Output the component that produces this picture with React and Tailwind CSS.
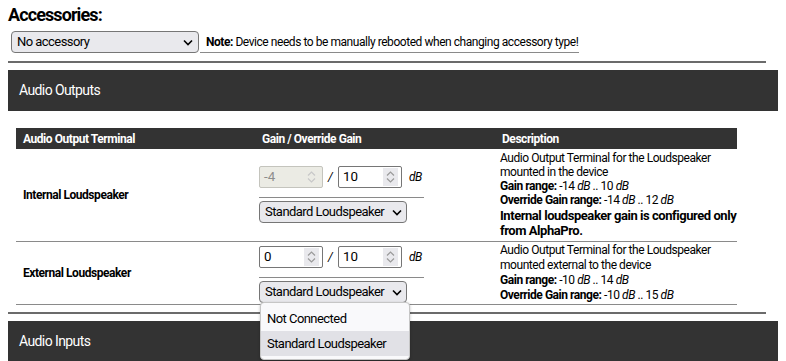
import React from 'react'

const body = { fontFamily: 'Roboto, "Liberation Sans", sans-serif' }

function NumberBox({ value, disabled }) {
  return (
    <div
      className={`flex items-center w-[64px] h-[22px] border rounded-[2px] pl-[4px] pr-[3px] ${
        disabled ? 'bg-[#ebebe4] border-[#c4c4bd] text-[#8d8d8d]' : 'bg-white border-[#767676] text-black'
      }`}
    >
      <span className="flex-1 text-[13.33px]">{value}</span>
      <span className={`w-[15px] h-[18px] flex flex-col items-center justify-center ${disabled ? '' : 'bg-[#e9e9ed]'}`}>
        <svg width="9" height="14" viewBox="0 0 9 14" fill="none" stroke={disabled ? '#c8c8c8' : '#9a9a9a'} strokeWidth="1.2">
          <path d="M1 5.5 4.5 2 8 5.5" />
          <path d="M1 8.5 4.5 12 8 8.5" />
        </svg>
      </span>
    </div>
  )
}

function FakeSelect({ children, width }) {
  return (
    <div
      className={`flex items-center justify-between gap-[8px] h-[22px] border border-[#767676] rounded-[4px] bg-[#e9e9ed] pl-[5px] pr-[5px] text-[13px] tracking-[-0.55px] text-black whitespace-nowrap ${width}`}
    >
      <span>{children}</span>
      <svg className="shrink-0" width="10" height="7" viewBox="0 0 10 7" fill="none" stroke="#000" strokeWidth="1.6">
        <path d="M1 1.5 5 5.5 9 1.5" />
      </svg>
    </div>
  )
}

function GainCell({ gain, override, disabled }) {
  return (
    <div className="flex items-center w-[165px] border-b border-[#8a8a8a] pb-[9px]">
      <NumberBox value={gain} disabled={disabled} />
      <span className="w-[15px] text-center italic text-[12px]">/</span>
      <NumberBox value={override} />
      <span className="ml-[7px] italic text-[12px] tracking-[-0.5px]">dB</span>
    </div>
  )
}

export default function App() {
  return (
    <div className="relative w-[786px] h-[361px] overflow-hidden bg-white text-black" style={body}>
      <div className="pl-[8px] pt-[3px]">
        <h2 className="text-[18px] font-bold leading-[24px] tracking-[-0.9px]">Accessories:</h2>

        <div className="flex items-end mt-[4px] pl-[3px]">
          <FakeSelect width="w-[188px]">No accessory</FakeSelect>
          <div className="ml-[1px] pl-[6px] pr-[1px] pb-[2px] border-b border-[#8a8a8a] text-[12px] leading-[15px] tracking-[-0.45px] whitespace-nowrap">
            <b>Note:</b> Device needs to be manually rebooted when changing accessory type!
          </div>
        </div>

        <div className="w-[758px] h-[2px] bg-[#6b6b6b] mt-[8px]" />

        <div className="w-[770px] h-[41px] bg-[#333333] mt-[7px] flex items-center pl-[11px] text-white text-[14px] tracking-[-0.6px]">
          Audio Outputs
        </div>

        {/* outputs table */}
        <div className="ml-[8px] mt-[17px] w-[721px] text-[12px] tracking-[-0.45px]">
          <div className="grid grid-cols-[239px_241px_241px] h-[21px] bg-[#333333] text-white font-bold items-center">
            <div className="pl-[7px]">Audio Output Terminal</div>
            <div className="pl-[7px]">Gain / Override Gain</div>
            <div className="pl-[6px]">Description</div>
          </div>

          <div className="grid grid-cols-[239px_241px_241px] border-b border-[#8a8a8a] h-[93px]">
            <div className="pl-[7px] flex items-center font-bold">Internal Loudspeaker</div>
            <div className="pl-[4px] pt-[17px] tracking-normal">
              <GainCell gain="-4" override="10" disabled />
              <div className="mt-[3px]">
                <FakeSelect width="w-[148px]">Standard Loudspeaker</FakeSelect>
              </div>
            </div>
            <div className="pl-[4px] pt-[2px] leading-[14px] whitespace-nowrap">
              <div>Audio Output Terminal for the Loudspeaker</div>
              <div>mounted in the device</div>
              <div><b>Gain range:</b> -14 <i>dB</i> .. 10 <i>dB</i></div>
              <div><b>Override Gain range:</b> -14 <i>dB</i> .. 12 <i>dB</i></div>
              <div className="font-bold text-[13px] leading-[15px] mt-[1px]">
                <div>Internal loudspeaker gain is configured only</div>
                <div>from AlphaPro.</div>
              </div>
            </div>
          </div>

          <div className="grid grid-cols-[239px_241px_241px] border-b border-[#8a8a8a] h-[63px]">
            <div className="pl-[7px] flex items-center font-bold">External Loudspeaker</div>
            <div className="pl-[4px] pt-[4px] tracking-normal">
              <GainCell gain="0" override="10" />
              <div className="mt-[3px]">
                <FakeSelect width="w-[148px]">Standard Loudspeaker</FakeSelect>
              </div>
            </div>
            <div className="pl-[4px] pt-[1px] leading-[15px] whitespace-nowrap">
              <div>Audio Output Terminal for the Loudspeaker</div>
              <div>mounted external to the device</div>
              <div><b>Gain range:</b> -10 <i>dB</i> .. 14 <i>dB</i></div>
              <div><b>Override Gain range:</b> -10 <i>dB</i> .. 15 <i>dB</i></div>
            </div>
          </div>
        </div>

        <div className="w-[758px] h-[2px] bg-[#6b6b6b] mt-[7px]" />

        <div className="w-[770px] h-[41px] bg-[#333333] mt-[7px] flex items-center pl-[11px] text-white text-[14px] tracking-[-0.6px]">
          Audio Inputs
        </div>
      </div>

      {/* open dropdown */}
      <div className="absolute left-[260px] top-[302px] w-[150px] bg-[#f9f9fb] border border-[#c6c6c6] rounded-[4px] shadow-[0_1px_3px_rgba(0,0,0,0.25)] py-[3px] text-[13px] tracking-[-0.55px] text-black">
        <div className="h-[25px] flex items-center pl-[6px]">Not Connected</div>
        <div className="h-[25px] flex items-center pl-[6px] bg-[#e1e1e6]">Standard Loudspeaker</div>
      </div>
    </div>
  )
}
